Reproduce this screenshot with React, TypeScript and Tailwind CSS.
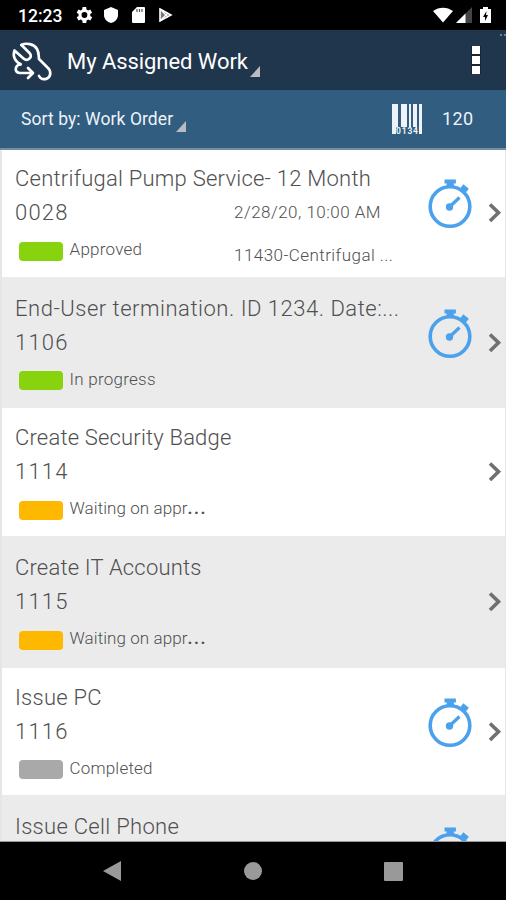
import React from "react";

type Job = {
  title: string;
  titleClass: string;
  id?: string;
  status?: string;
  statusClass?: string;
  color?: string;
  rowClass: string;
  truncated?: boolean;
  timer?: boolean;
  date?: string;
  asset?: string;
};

const jobs: Job[] = [
  { title: "Centrifugal Pump Service- 12 Month", titleClass: "tracking-[0.24px]", id: "0028", status: "Approved", statusClass: "tracking-[0.25px]", color: "bg-[#87d30d]", rowClass: "h-[127px] bg-white pt-[15px]", timer: true, date: "2/28/20, 10:00 AM", asset: "11430-Centrifugal ..." },
  { title: "End-User termination. ID 1234. Date:...", titleClass: "tracking-[0.52px]", id: "1106", status: "In progress", statusClass: "tracking-[0.25px]", color: "bg-[#87d30d]", rowClass: "h-[131px] bg-[#ebebeb] pt-[17.5px]", timer: true },
  { title: "Create Security Badge", titleClass: "tracking-[0.18px]", id: "1114", status: "Waiting on appr", statusClass: "tracking-[0.08px]", color: "bg-[#ffb800]", rowClass: "h-[128px] bg-white pt-[16px]", truncated: true },
  { title: "Create IT Accounts", titleClass: "tracking-[0.18px]", id: "1115", status: "Waiting on appr", statusClass: "tracking-[0.08px]", color: "bg-[#ffb800]", rowClass: "h-[132px] bg-[#ebebeb] pt-[18px]", truncated: true },
  { title: "Issue PC", titleClass: "tracking-[0.25px]", id: "1116", status: "Completed", statusClass: "tracking-[0.2px]", color: "bg-[#a9a9a9]", rowClass: "h-[127px] bg-white pt-[15.5px]", timer: true },
  { title: "Issue Cell Phone", titleClass: "tracking-[0.3px]", rowClass: "h-[130px] bg-[#ebebeb] pt-[18px]", timer: true },
];

function Stopwatch() {
  return (
    <svg width="46" height="50" viewBox="0 0 46 50" fill="none" stroke="#4ba1ec">
      <circle cx="23" cy="27.500" r="19.800" strokeWidth="3.600" />
      <path d="M17.500 2.500h11.400M35 7l5.500 4.500" strokeWidth="4.200" />
      <path d="M34.500 12.500l3-3.500" strokeWidth="4.500" />
      <path d="M20 3h6.500l1 6h-8.500z" fill="#4ba1ec" stroke="none" />
      <path d="M23 27.500l9.500-9" strokeWidth="3.200" />
      <circle cx="22.500" cy="28" r="3.700" fill="#4ba1ec" stroke="none" />
    </svg>
  );
}

function Corner({ className }: { className: string }) {
  return (
    <svg className={className} width="10" height="11" viewBox="0 0 10 11">
      <path d="M10 0v11H0z" fill="#b9bcc0" />
    </svg>
  );
}

function JobRow({ job }: { job: Job }) {
  return (
    <li className={`flex shrink-0 border-l-2 border-r border-l-[#e6e6e6] border-r-[#e6e6e6] pl-[13px] font-light text-[#505050] ${job.rowClass}`}>
      <div className="w-[412px] shrink-0">
        <div className={`h-[28px] whitespace-nowrap text-[22px] leading-[28px] ${job.titleClass}`}>{job.title}</div>
        {job.id && (
          <>
            <div className="mt-[6px] flex h-[28px] items-center">
              <span className="w-[219px] text-[22px] leading-[28px] tracking-[1.2px]">{job.id}</span>
              <span className="text-[17px] tracking-[0.48px]">{job.date}</span>
            </div>
            <div className="mt-[10px] flex h-[26px] items-start">
              <span className={`ml-[4px] mt-[4.500px] h-[19px] w-[44px] rounded-[4px] ${job.color}`} />
              <span className={`ml-[6.500px] w-[164.500px] whitespace-nowrap text-[17px] leading-[25px] ${job.statusClass}`}>
                {job.status}
                {job.truncated && <span className="font-bold tracking-[1.5px]">...</span>}
              </span>
              <span className="mt-[6px] whitespace-nowrap text-[17px] leading-[24px] tracking-[0.45px]">{job.asset}</span>
            </div>
          </>
        )}
      </div>
      <div className="flex w-[60px] shrink-0 items-start pt-[14px]">{job.timer && <Stopwatch />}</div>
      <svg className="mt-[38px] shrink-0" width="14" height="20" viewBox="0 0 14 20" fill="none" stroke="#707070" strokeWidth="3.6">
        <path d="M3 1.500L11.500 9.700 3 18" />
      </svg>
    </li>
  );
}

function StatusBar() {
  return (
    <div className="flex h-[30px] shrink-0 items-center bg-black pl-[18px] pr-[15px] text-white">
      <span className="w-[57px] pt-[2px] font-['Roboto'] text-[17.5px] font-medium">12:23</span>
      <svg className="shrink-0" width="18" height="18" viewBox="2.500 2 20 20" fill="white">
        <path d="M19.4 13a7.500 7.500 0 000-2l2.100-1.600-2-3.500-2.500 1a8 8 0 00-1.700-1l-.4-2.700h-4l-.4 2.700a8 8 0 00-1.700 1l-2.500-1-2 3.500L6.500 11a7.500 7.500 0 000 2l-2.100 1.600 2 3.500 2.500-1a8 8 0 001.700 1l.4 2.700h4l.4-2.700a8 8 0 001.700-1l2.500 1 2-3.500zM13 15.200a3.200 3.200 0 110-6.400 3.200 3.200 0 010 6.400z" />
      </svg>
      <svg className="ml-[10px]" width="16" height="18" viewBox="0 0 16 18"><path d="M8 1l7 3v5c0 4-3 7-7 8-4-1-7-4-7-8V4z" fill="white" /></svg>
      <svg className="ml-[12px]" width="15" height="18" viewBox="0 0 15 18"><path d="M6 1h7a1 1 0 011 1v14a1 1 0 01-1 1H2a1 1 0 01-1-1V6z" fill="white" /><path d="M6 3v3M8.500 3v3M11 3v3" stroke="#555" strokeWidth="1.200" /></svg>
      <svg className="ml-[12px]" width="16" height="18" viewBox="0 0 16 18"><path d="M2 3l11 6-11 6z" fill="#777" stroke="white" strokeWidth="1.600" /><path d="M2 3l8 8M2 15l8-8" stroke="white" strokeWidth="1.300" /></svg>
      <svg className="ml-auto" width="20" height="16" viewBox="0 0 20 16"><path d="M0 4C6-.5 14-.5 20 4L10 15.500z" fill="white" /></svg>
      <svg className="ml-[3px]" width="16" height="16" viewBox="0 0 16 16"><path d="M16 0v16H0z" fill="#444" /><path d="M9.500 6.500V16H0z" fill="white" /></svg>
      <svg className="ml-[8px]" width="11" height="18" viewBox="0 0 11 18"><path d="M3 1h5v2h3v14H0V3h3z" fill="white" /><path d="M6.500 5L3 11h2v4l3-6H6z" fill="black" /></svg>
    </div>
  );
}

export default function App() {
  return (
    <div className="flex h-[900px] w-[506px] flex-col overflow-hidden bg-black font-['Roboto','Noto_Sans',sans-serif]">
      <StatusBar />
      <header className="relative flex h-[60px] shrink-0 items-center bg-[#1f364c] text-white">
        <svg className="ml-[11px] mt-[1px]" width="42" height="42" viewBox="0 0 42 42" fill="none" stroke="white" strokeWidth="2.700" strokeLinecap="round" strokeLinejoin="round">
          <path d="M10.500 5C15 2.500 23 4 26 9C28 12.500 27.500 15 28 19L36.500 27.500C40.500 31 40 36.500 36 38.500C33 40 29.500 39 28 36" />
          <path d="M10.500 5L18.500 13C22.500 17 16.500 22 12.500 18.500L3.500 10.500C1.500 16 4 22 9.500 24" />
          <path d="M9.500 24.500C3.500 25 3 33 9 33H21.500M17 28L22 33L17 38" />
        </svg>
        <h1 className="ml-[14px] mt-[2px] whitespace-nowrap text-[22px] tracking-[-0.06px]">My Assigned Work</h1>
        <Corner className="ml-[2px] mt-[23px]" />
        <div className="ml-auto mr-[25px] flex flex-col gap-[2px] border-x border-[#172431] bg-[#172431]">
          <span className="size-[8px] bg-white" /><span className="size-[8px] bg-white" /><span className="size-[8px] bg-white" />
        </div>
        <span className="absolute right-0 top-[4px] flex gap-[2px]"><i className="size-[2px] bg-[#71808f]" /><i className="size-[2px] bg-[#71808f]" /></span>
      </header>
      <div className="flex h-[60px] shrink-0 items-center border-b-2 border-[#788da0] bg-[#315d80] pl-[21px] text-[#edf3f8]">
        <span className="whitespace-nowrap text-[17.500px] tracking-[0.08px]">Sort by: Work Order</span>
        <Corner className="ml-[3px] mt-[14px]" />
        <svg className="ml-auto" width="30" height="31" viewBox="0 0 30 31">
          <path d="M0 0h6v30H0zM9 0h6v23H9zM17 0h2v23h-2zM21 0h4v23h-4zM27 0h3v30h-3z" fill="#edf3f8" />
          <path d="M4 23.500h22V30H4z" fill="#315d80" />
          <text x="4" y="30" fill="#edf3f8" fontSize="8.500" fontWeight="700" fontFamily="Roboto" textLength="22">0134</text>
        </svg>
        <span className="ml-[20px] mt-[-1px] w-[64px] text-[18px] tracking-[0.4px]">120</span>
      </div>
      <ul className="flex h-[692px] shrink-0 flex-col overflow-hidden border-b border-[#999]">
        {jobs.map((job) => <JobRow key={job.title} job={job} />)}
      </ul>
      <nav className="flex h-[58px] shrink-0 items-center bg-black pl-[103px]">
        <svg width="18" height="20" viewBox="0 0 18 20"><path d="M18 0v20L0 10z" fill="#999" /></svg>
        <span className="ml-[123px] size-[18px] rounded-full bg-[#999]" />
        <span className="ml-[122px] size-[19px] rounded-[1px] bg-[#999]" />
      </nav>
    </div>
  );
}
